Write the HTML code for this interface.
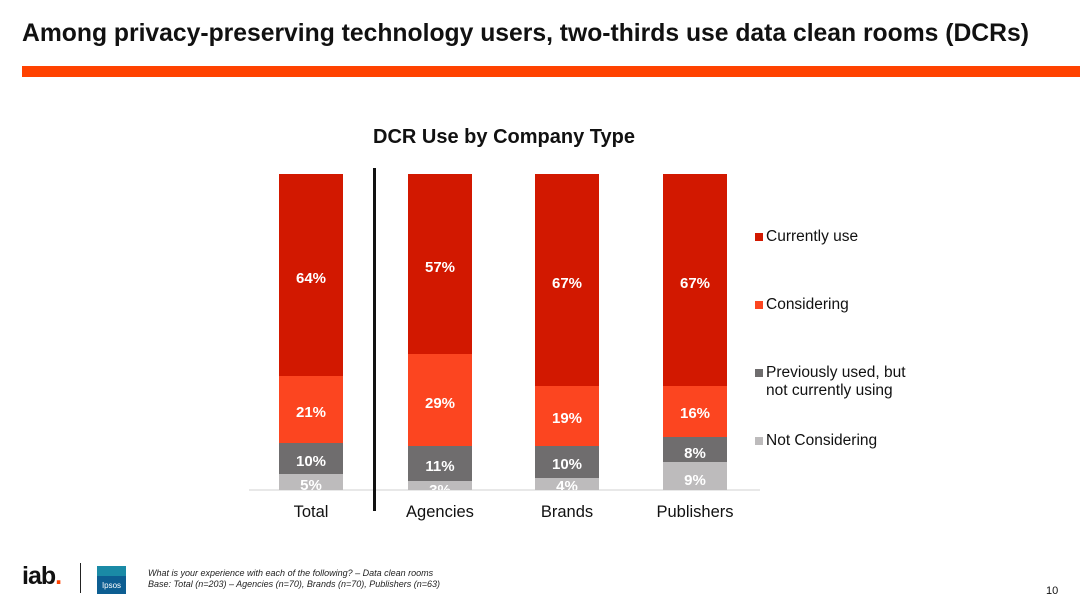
<!DOCTYPE html>
<html><head><meta charset="utf-8"><style>
body{margin:0;width:1080px;height:607px;background:#fff;position:relative;overflow:hidden;font-family:"Liberation Sans",Arial,sans-serif}
.a{position:absolute}
.t{left:22px;top:20px;font-size:24.7px;font-weight:bold;color:#111;white-space:nowrap}
.bar{position:absolute;top:174px;width:64px;height:316px;overflow:hidden}
.s{position:absolute;left:0;width:64px}
.l{position:absolute;left:0;width:64px;text-align:center;color:#fff;font-weight:bold;font-size:15px;line-height:16px;margin-top:2px}
.r{background:#d21800}.o{background:#fc4520}.g{background:#6f6d6e}.lg{background:#bdbbbc}
.x{position:absolute;top:503px;font-size:16.5px;color:#111;text-align:center;width:120px}
.lgd{position:absolute;left:755px;font-size:15.5px;color:#111;line-height:18px}
.lgd i{position:absolute;left:0;top:5px;width:8px;height:8px}
.lgd span{display:block;padding-left:11px}
</style></head><body>
<div class="a t">Among privacy-preserving technology users, two-thirds use data clean rooms (DCRs)</div>
<div class="a" style="left:22px;top:66px;width:1058px;height:11px;background:#ff4200"></div>
<div class="a" style="left:0;width:1008px;top:126px;text-align:center;font-size:20px;font-weight:bold;color:#111">DCR Use by Company Type</div>
<div class="a" style="left:249px;top:489px;width:511px;height:2px;background:#e8e8e8"></div>
<div class="a" style="left:373px;top:168px;width:3px;height:343px;background:#111"></div>

<div class="bar" style="left:279px">
<div class="s r" style="top:0;height:202px"></div><div class="s o" style="top:202px;height:67px"></div><div class="s g" style="top:269px;height:31px"></div><div class="s lg" style="top:300px;height:20px"></div>
<div class="l" style="top:95px">64%</div><div class="l" style="top:229px">21%</div><div class="l" style="top:278px">10%</div><div class="l" style="top:302px">5%</div></div>

<div class="bar" style="left:408px">
<div class="s r" style="top:0;height:180px"></div><div class="s o" style="top:180px;height:92px"></div><div class="s g" style="top:272px;height:35px"></div><div class="s lg" style="top:307px;height:20px"></div>
<div class="l" style="top:84px">57%</div><div class="l" style="top:220px">29%</div><div class="l" style="top:283px">11%</div><div class="l" style="top:307px">3%</div></div>

<div class="bar" style="left:535px">
<div class="s r" style="top:0;height:212px"></div><div class="s o" style="top:212px;height:60px"></div><div class="s g" style="top:272px;height:32px"></div><div class="s lg" style="top:304px;height:20px"></div>
<div class="l" style="top:100px">67%</div><div class="l" style="top:235px">19%</div><div class="l" style="top:281px">10%</div><div class="l" style="top:303px">4%</div></div>

<div class="bar" style="left:663px">
<div class="s r" style="top:0;height:212px"></div><div class="s o" style="top:212px;height:51px"></div><div class="s g" style="top:263px;height:25px"></div><div class="s lg" style="top:288px;height:30px"></div>
<div class="l" style="top:100px">67%</div><div class="l" style="top:230px">16%</div><div class="l" style="top:270px">8%</div><div class="l" style="top:297px">9%</div></div>

<div class="x" style="left:251px">Total</div>
<div class="x" style="left:380px">Agencies</div>
<div class="x" style="left:507px">Brands</div>
<div class="x" style="left:635px">Publishers</div>

<div class="lgd" style="top:228px"><i class="r"></i><span>Currently use</span></div>
<div class="lgd" style="top:296px"><i class="o"></i><span>Considering</span></div>
<div class="lgd" style="top:364px"><i class="g"></i><span>Previously used, but<br>not currently using</span></div>
<div class="lgd" style="top:432px"><i class="lg"></i><span>Not Considering</span></div>

<div class="a" style="left:22px;top:562px;font-size:25px;font-weight:bold;color:#111;letter-spacing:-1px">iab<span style="color:#ff4200">.</span></div>
<div class="a" style="left:80px;top:563px;width:1px;height:30px;background:#222"></div>
<div class="a" style="left:97px;top:566px;width:29px;height:28px;background:#1a8aa6"><div style="position:absolute;left:0;right:0;top:10px;height:18px;background:#0d5e92"></div><div style="position:absolute;left:0;width:29px;top:15px;text-align:center;color:#fff;font-size:8px">Ipsos</div></div>
<div class="a" style="left:148px;top:568px;font-size:9px;font-style:italic;color:#222;line-height:11px;white-space:nowrap">What is your experience with each of the following? – Data clean rooms<br>Base: Total (n=203) – Agencies (n=70), Brands (n=70), Publishers (n=63)</div>
<div class="a" style="left:1046px;top:585px;font-size:11px;color:#111">10</div>
</body></html>
